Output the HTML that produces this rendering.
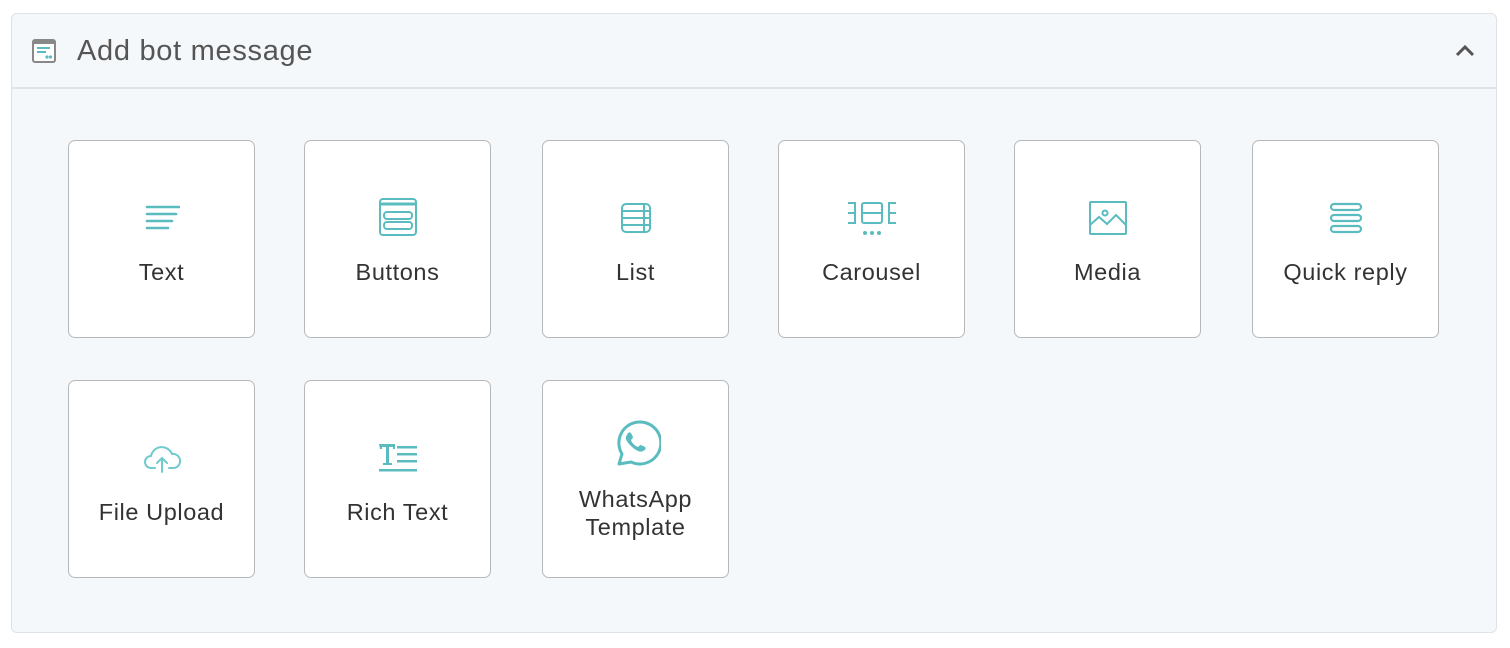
<!DOCTYPE html>
<html><head><style>
body{margin:0;width:1510px;height:648px;background:#fff;font-family:"Liberation Sans",sans-serif;position:relative;overflow:hidden}
.panel{position:absolute;left:11px;top:13px;width:1484px;height:618px;border:1px solid #dde3e8;border-radius:6px;background:#f5f8fb}
.hdr{position:absolute;left:0;top:0;right:0;height:73px;border-bottom:2px solid #dde3e8}
.title{position:absolute;left:65px;top:21px;font-size:29px;color:#555;letter-spacing:0.7px}
.card{position:absolute;width:185px;height:196px;border:1.5px solid #b8b8b8;border-radius:7px;background:#fff}
.lbl{position:absolute;left:0;right:0;text-align:center;font-size:23.5px;color:#333;letter-spacing:0.6px;line-height:28px}
svg.ic{position:absolute;left:50%;transform:translateX(-50%)}
</style></head><body>
<div class="panel">
 <div class="hdr">
  <svg style="position:absolute;left:20px;top:25px" width="25" height="25" viewBox="0 0 25 25"><rect x="1" y="1" width="22" height="22" rx="2" fill="#fff" stroke="#888" stroke-width="2"/><rect x="1" y="1" width="22" height="4" fill="#888"/><path d="M5 9h13M5 13h9" stroke="#5bbcc0" stroke-width="2"/><circle cx="15" cy="18" r="1.6" fill="#5bbcc0"/><circle cx="18.5" cy="18" r="1.6" fill="#5bbcc0"/></svg>
  <div class="title">Add bot message</div>
  <svg style="position:absolute;left:1443px;top:30px" width="20" height="14" viewBox="0 0 20 14"><path d="M2 11L10 3L18 11" fill="none" stroke="#555" stroke-width="3"/></svg>
 </div>
</div>

<div class="card" style="left:68px;top:140px">
 <svg class="ic" style="top:62px" width="36" height="30" viewBox="0 0 36 30"><g stroke="#5bbcc0" stroke-width="2.6" stroke-linecap="round"><path d="M3 4h32M3 11h29M3 18h25M3 25h21"/></g></svg>
 <div class="lbl" style="top:117px">Text</div>
</div>
<div class="card" style="left:304px;top:140px">
 <svg class="ic" style="top:56px" width="40" height="40" viewBox="0 0 40 40"><g fill="none" stroke="#5bbcc0" stroke-width="2"><rect x="2" y="2" width="36" height="36" rx="3"/><path d="M2 7h36" stroke-width="3"/><rect x="6" y="15" width="28" height="7" rx="3"/><rect x="6" y="25" width="28" height="7" rx="3"/></g></svg>
 <div class="lbl" style="top:117px">Buttons</div>
</div>
<div class="card" style="left:542px;top:140px">
 <svg class="ic" style="top:61px" width="32" height="32" viewBox="0 0 32 32"><g fill="none" stroke="#5bbcc0" stroke-width="2"><rect x="2" y="2" width="28" height="28" rx="4"/><path d="M2 9h28M2 16h28M2 23h28M24 2v28"/></g></svg>
 <div class="lbl" style="top:117px">List</div>
</div>
<div class="card" style="left:778px;top:140px">
 <svg class="ic" style="top:60px" width="50" height="36" viewBox="0 0 50 36"><g fill="none" stroke="#5bbcc0" stroke-width="2"><path d="M1 2h7v20H1M1 12h7"/><rect x="15" y="2" width="20" height="20" rx="2"/><path d="M15 12h20M49 2h-7v20h7M42 12h7"/></g><g fill="#5bbcc0"><circle cx="18" cy="32" r="2"/><circle cx="25" cy="32" r="2"/><circle cx="32" cy="32" r="2"/></g></svg>
 <div class="lbl" style="top:117px">Carousel</div>
</div>
<div class="card" style="left:1014px;top:140px">
 <svg class="ic" style="top:59px" width="40" height="36" viewBox="0 0 40 36"><g fill="none" stroke="#5bbcc0" stroke-width="2"><rect x="2" y="2" width="36" height="32" rx="1"/><path d="M2 25l9-8 8 7 9-9 10 10"/><circle cx="17" cy="13" r="2.5"/></g></svg>
 <div class="lbl" style="top:117px">Media</div>
</div>
<div class="card" style="left:1252px;top:140px">
 <svg class="ic" style="top:60px" width="34" height="34" viewBox="0 0 34 34"><g fill="none" stroke="#5bbcc0" stroke-width="2.2"><rect x="2" y="3" width="30" height="6" rx="3"/><rect x="2" y="14" width="30" height="6" rx="3"/><rect x="2" y="25" width="30" height="6" rx="3"/></g></svg>
 <div class="lbl" style="top:117px">Quick reply</div>
</div>

<div class="card" style="left:68px;top:380px">
 <svg class="ic" style="top:62px" width="38" height="30" viewBox="0 0 38 30"><g fill="none" stroke="#6fcbd0" stroke-width="2" stroke-linecap="round"><path d="M12 25H8a6 6 0 0 1 0-12 11 11 0 0 1 21-2 7 7 0 0 1 2 14h-5"/><path d="M19 29V15M14 20l5-5 5 5"/></g></svg>
 <div class="lbl" style="top:117px">File Upload</div>
</div>
<div class="card" style="left:304px;top:380px">
 <svg class="ic" style="top:60px" width="40" height="32" viewBox="0 0 40 32"><g fill="#5bbcc0"><path d="M1 3h16v5h-2V6h-4v16h3v2H5v-2h3V6H4v2H2z"/><rect x="19" y="5" width="20" height="2.5"/><rect x="19" y="12" width="20" height="2.5"/><rect x="19" y="19" width="20" height="2.5"/><rect x="1" y="28" width="38" height="2.5"/></g></svg>
 <div class="lbl" style="top:117px">Rich Text</div>
</div>
<div class="card" style="left:542px;top:380px">
 <svg class="ic" style="top:38px" width="50" height="50" viewBox="0 0 50 50"><g fill="none" stroke="#5bbcc0" stroke-width="3"><path d="M8 45l3-10A21 21 0 1 1 20 43z" stroke-linejoin="round"/></g><path d="M16 16c1-3 3-3 4-2l2 4c0 1-1 2-2 3 1 3 4 6 7 7 1-1 2-2 3-2l4 2c1 1 1 3-2 4-3 2-8-1-12-5s-7-8-4-11z" fill="#5bbcc0"/></svg>
 <div class="lbl" style="top:104px">WhatsApp<br>Template</div>
</div>
</body></html>
